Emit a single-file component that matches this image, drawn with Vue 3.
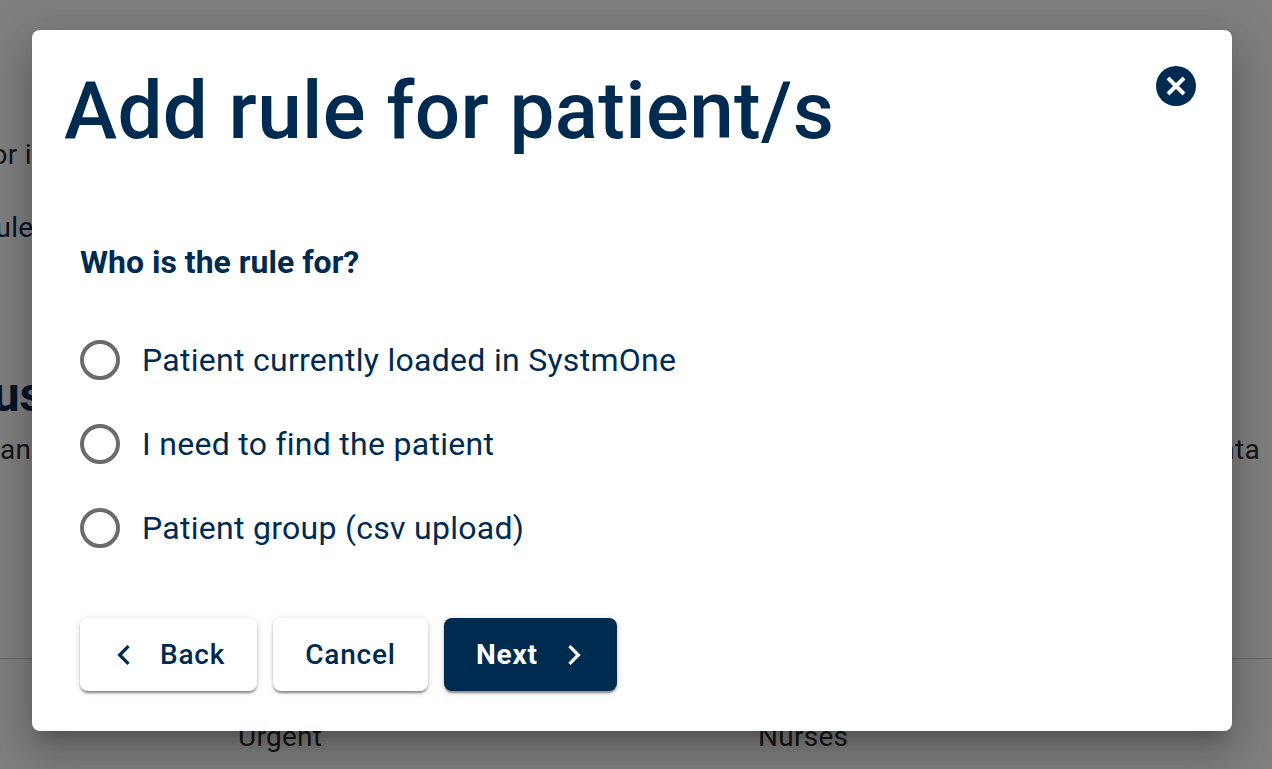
<script setup>
const options = [
  'Patient currently loaded in SystmOne',
  'I need to find the patient',
  'Patient group (csv upload)'
]
</script>

<template>
  <div class="page">
    <div class="backdrop-page">
      <p class="bg-line first">For information about this page</p>
      <p class="bg-line navy">Rules</p>
      <h2 class="bg-heading">Status</h2>
      <div class="bg-row">
        <span>Plan</span>
        <span>Data</span>
      </div>
      <div class="bg-table">
        <span>Urgent</span>
        <span>Nurses</span>
      </div>
    </div>

    <div class="overlay">
      <section class="dialog">
        <header class="dialog__head">
          <h1>Add rule for patient/s</h1>
          <button class="close" aria-label="Close">
            <svg width="40" height="40" viewBox="0 0 40 40">
              <circle cx="20" cy="20" r="20" fill="#002b50" />
              <path d="M12 12 28 28M28 12 12 28" stroke="#fff" stroke-width="4" fill="none" />
            </svg>
          </button>
        </header>

        <div class="dialog__body">
          <p class="question">Who is the rule for?</p>
          <div class="options">
            <label v-for="option in options" :key="option" class="option">
              <span class="radio"></span>
              <span>{{ option }}</span>
            </label>
          </div>

          <div class="actions">
            <button class="btn btn--back">
              <svg width="40" height="40" viewBox="0 0 24 24">
                <path d="M15.41 7.41 14 6l-6 6 6 6 1.41-1.41L10.83 12z" fill="#002b50" />
              </svg>
              Back
            </button>
            <button class="btn btn--cancel">Cancel</button>
            <button class="btn btn--next">
              Next
              <svg width="40" height="40" viewBox="0 0 24 24">
                <path d="M10 6 8.59 7.41 13.17 12l-4.58 4.59L10 18l6-6z" fill="#fff" />
              </svg>
            </button>
          </div>
        </div>
      </section>
    </div>
  </div>
</template>

<style>
html,
body {
  margin: 0;
  background: #fff;
  overflow: hidden;
}
</style>

<style scoped>
.page {
  position: relative;
  width: 1272px;
  height: 769px;
  overflow: hidden;
  font-family: Roboto, "Liberation Sans", sans-serif;
  color: #002b50;
}

.backdrop-page {
  display: flex;
  flex-direction: column;
  height: 100%;
  box-sizing: border-box;
  padding-top: 136px;
  color: #2c2c2c;
  font-size: 28px;
  line-height: 38px;
  letter-spacing: 0.26px;
}

.bg-line {
  margin: 0;
  margin-left: -24px;
  white-space: nowrap;
}

.bg-line.navy {
  margin-top: 35px;
  margin-left: -22px;
  color: #002b50;
}

.bg-heading {
  margin: 120px 0 0 -95px;
  font-size: 48px;
  line-height: 56px;
  font-weight: 700;
  letter-spacing: 0;
  color: #002b50;
}

.bg-row {
  display: flex;
  justify-content: space-between;
  margin: 8px 12px 0 -25px;
}

.bg-table {
  display: grid;
  grid-template-columns: 520px 1fr;
  margin-top: 189px;
  padding: 59px 0 0 238px;
  height: 60px;
  border-top: 1px solid #ccc;
  box-sizing: content-box;
}

.overlay {
  position: absolute;
  inset: 0;
  display: flex;
  justify-content: flex-start;
  padding: 30px 0 0 32px;
  box-sizing: border-box;
  background: rgba(0, 0, 0, 0.5);
}

.dialog {
  display: flex;
  flex-direction: column;
  box-sizing: border-box;
  width: 1200px;
  height: 701px;
  border-radius: 8px;
  background: #fff;
  box-shadow: 0 11px 15px -7px rgba(0, 0, 0, 0.2), 0 24px 38px 3px rgba(0, 0, 0, 0.14), 0 9px 46px 8px rgba(0, 0, 0, 0.12);
}

.dialog__head {
  display: flex;
  justify-content: space-between;
  align-items: flex-start;
  padding: 36px 36px 0 32px;
}

.dialog__head h1 {
  margin: 0;
  font-size: 80px;
  line-height: 90px;
  font-weight: 500;
  letter-spacing: 0.36px;
  color: #002b50;
}

.close {
  width: 40px;
  height: 40px;
  padding: 0;
  border: 0;
  background: none;
  display: block;
}

.dialog__body {
  padding: 0 48px;
}

.question {
  margin: 86px 0 0;
  font-size: 32px;
  line-height: 40px;
  font-weight: 700;
}

.options {
  display: flex;
  flex-direction: column;
  gap: 44px;
  margin-top: 58px;
}

.option {
  display: flex;
  align-items: center;
  gap: 22px;
  height: 40px;
  font-size: 32px;
  letter-spacing: 0.28px;
}

.radio {
  width: 40px;
  height: 40px;
  box-sizing: border-box;
  border: 4px solid #6b6b6b;
  border-radius: 50%;
}

.actions {
  display: flex;
  gap: 16px;
  margin-top: 70px;
}

.btn {
  display: flex;
  align-items: center;
  justify-content: center;
  height: 73px;
  padding: 0;
  border: 0;
  border-radius: 8px;
  font-family: inherit;
  font-size: 28px;
  font-weight: 500;
  letter-spacing: 0.8px;
  color: #002b50;
  background: #fff;
  box-shadow: 0 3px 2px -1px rgba(0, 0, 0, 0.3), 0 2px 3px 0 rgba(0, 0, 0, 0.16), 0 1px 7px 0 rgba(0, 0, 0, 0.14);
}

.btn--back {
  width: 177px;
  justify-content: flex-start;
  gap: 16px;
  padding-left: 24px;
  box-sizing: border-box;
}

.btn--cancel {
  width: 155px;
}

.btn--next {
  width: 173px;
  justify-content: flex-start;
  gap: 16px;
  padding-left: 32px;
  box-sizing: border-box;
  color: #fff;
  font-weight: 700;
  background: #002b50;
}
</style>
